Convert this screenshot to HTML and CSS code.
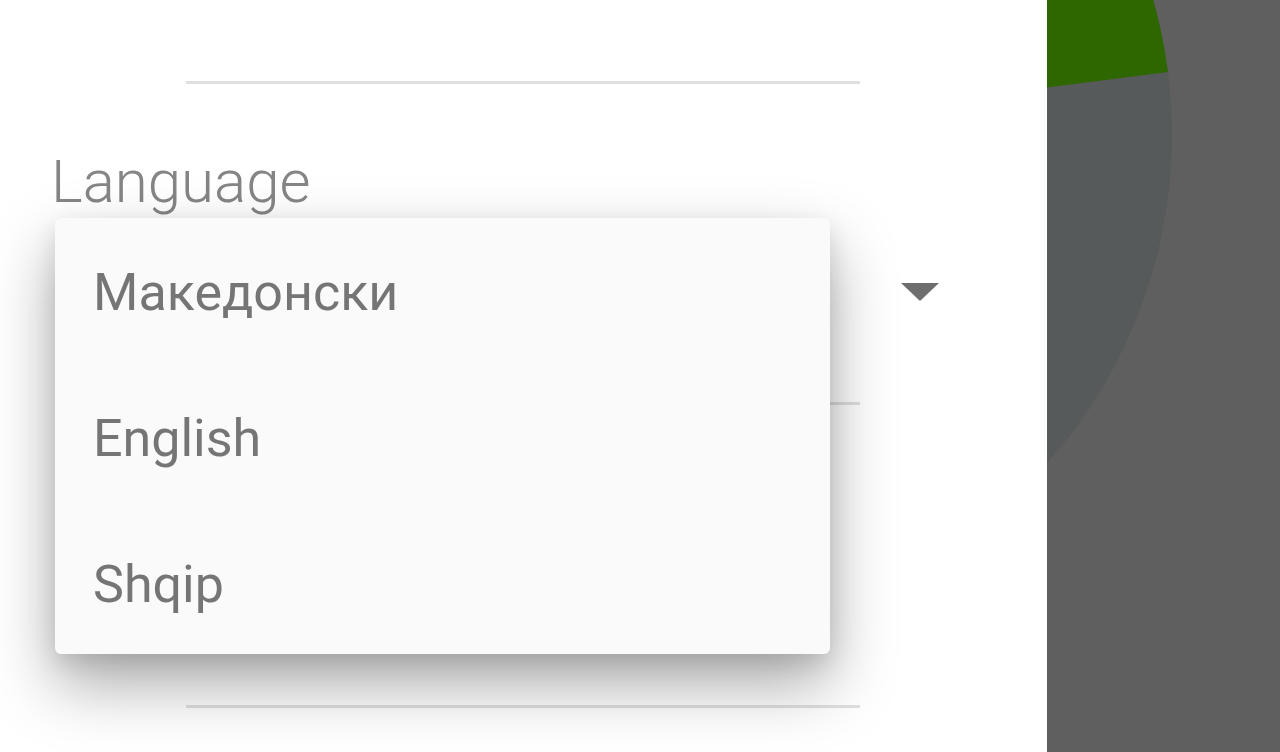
FILE: index.html
```html
<!DOCTYPE html>
<html>
<head>
<meta charset="utf-8">
<link rel="stylesheet" href="styles.css">
</head>
<body>
<div class="screen">
  <div class="dialog">
    <div class="rule rule-top"></div>
    <div class="label">Language</div>
    <div class="field">
      <span class="arrow"></span>
    </div>
    <div class="rule rule-mid"></div>
    <div class="rule rule-bottom"></div>
    <ul class="menu">
      <li class="item">Македонски</li>
      <li class="item">English</li>
      <li class="item">Shqip</li>
    </ul>
  </div>
  <div class="scrim">
    <svg class="pie" width="233" height="752" viewBox="0 0 233 752">
      <circle cx="-368" cy="135" r="493" fill="#575a5a"/>
      <path d="M -368 135 L 121 72 A 493 493 0 0 0 -368 -358 Z" fill="#2e6600"/>
    </svg>
  </div>
</div>
</body>
</html>
```
FILE: styles.css
```css
html, body {
  margin: 0;
  padding: 0;
}
body {
  font-family: Roboto, "Noto Sans", sans-serif;
  overflow: hidden;
}
.screen {
  display: flex;
  width: 1280px;
  height: 752px;
}
.dialog {
  position: relative;
  width: 1047px;
  height: 752px;
  background: #ffffff;
  flex: none;
}
.rule {
  height: 3px;
  width: 674px;
  margin-left: 186px;
  background: #e0e0e0;
}
.rule-top {
  margin-top: 81px;
}
.label {
  margin-top: 68px;
  margin-left: 51px;
  font-weight: 300;
  font-size: 60px;
  line-height: 59px;
  color: #858585;
}
.field {
  height: 191px;
  display: flex;
  align-items: flex-start;
}
.arrow {
  margin-top: 72px;
  margin-left: 901px;
  width: 0;
  height: 0;
  border-left: 19px solid transparent;
  border-right: 19px solid transparent;
  border-top: 18px solid #6e6e6e;
}
.rule-mid {
  margin-top: 0;
}
.rule-bottom {
  margin-top: 300px;
}
.menu {
  position: absolute;
  left: 55px;
  top: 218px;
  width: 775px;
  height: 436px;
  margin: 0;
  padding: 2px 0 0;
  box-sizing: border-box;
  list-style: none;
  overflow: hidden;
  background: #fafafa;
  border-radius: 6px;
  box-shadow: 0 30px 64px rgba(0, 0, 0, 0.34), 0 8px 22px rgba(0, 0, 0, 0.1);
}
.item {
  height: 146px;
  line-height: 146px;
  padding-left: 38px;
  font-size: 52px;
  font-weight: 400;
  color: #757575;
}
.scrim {
  flex: 1;
  height: 752px;
  background: #5f5f5f;
  overflow: hidden;
}
.pie {
  display: block;
}
```
